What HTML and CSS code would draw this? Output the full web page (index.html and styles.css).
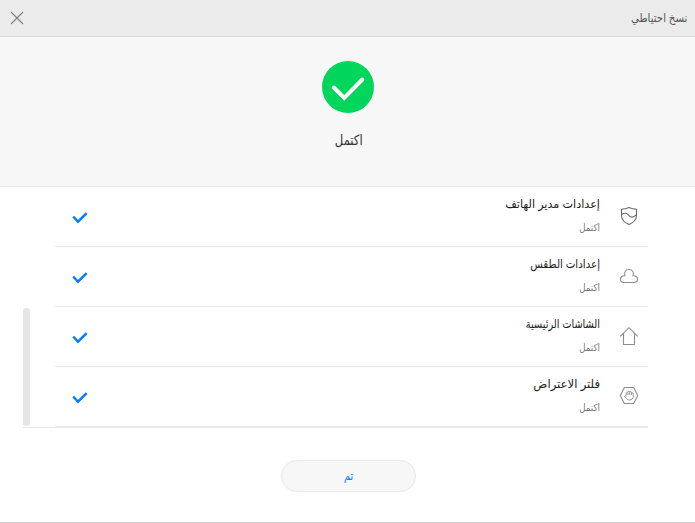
FILE: index.html
```html
<!DOCTYPE html>
<html lang="ar" dir="rtl">
<head>
<meta charset="utf-8">
<title>نسخ احتياطي</title>
<link rel="stylesheet" href="styles.css">
</head>
<body>
<div class="window">
  <header class="titlebar">
    <h1>نسخ احتياطي</h1>
    <svg class="close" width="14" height="14" viewBox="0 0 14 14"><path d="M1 1l12 12M13 1L1 13"/></svg>
  </header>
  <section class="status">
    <svg width="52" height="52" viewBox="0 0 52 52"><circle cx="26" cy="26" r="26" fill="#00d65b"/><path d="M11.800 26.500L22.200 37L40.300 18.500" fill="none" stroke="#fff" stroke-width="4" stroke-linecap="round"/></svg>
    <p>اكتمل</p>
  </section>
  <main class="list">
    <ul>
      <li>
        <svg class="icon shield" viewBox="0 0 20 20"><path d="M10 1.500Q13.500 3 17.500 3.200V10Q17 15.500 10 18.500Q3 15.500 2.500 10V3.200Q6.500 3 10 1.500ZM2.500 8.500C7 5.500 9 8.500 11 10.500Q14 12.500 17.500 8.500"/></svg>
        <div class="text"><h2 class="manager">إعدادات مدير الهاتف</h2><p>اكتمل</p></div>
        <svg class="check" viewBox="0 0 16 12"><path d="M1.200 4.500L6 9.700L14.700 1.200"/></svg>
      </li>
      <li>
        <svg class="icon" viewBox="0 0 20 20"><path d="M5 16.500H15C17.200 16.500 18.500 15 18.500 13C18.500 11 16.800 9.500 14 9.700C15.500 6 13 3.500 10 3.500C7 3.500 4.500 6 6 9.700C3.200 9.500 1.500 11 1.500 13C1.500 15 2.800 16.500 5 16.500Z"/></svg>
        <div class="text"><h2 class="weather">إعدادات الطقس</h2><p>اكتمل</p></div>
        <svg class="check" viewBox="0 0 16 12"><path d="M1.200 4.500L6 9.700L14.700 1.200"/></svg>
      </li>
      <li>
        <svg class="icon" viewBox="0 0 20 20"><path d="M1.300 10.300L10 1.700L18.700 10.300M4.500 7.500V18.500H15.500V7.500"/></svg>
        <div class="text"><h2 class="home">الشاشات الرئيسية</h2><p>اكتمل</p></div>
        <svg class="check" viewBox="0 0 16 12"><path d="M1.200 4.500L6 9.700L14.700 1.200"/></svg>
      </li>
      <li>
        <svg class="icon" viewBox="0 0 20 20"><path d="M5.300 1.500H14.700L18.700 9.500L14.700 17.500H5.300L1.300 9.500Z"/><path class="fine" d="M7.200 9.500V6.500Q8 5 8.900 6.500V9M8.900 6Q9.800 4 10.700 5.800V9M10.700 6Q11.700 4.300 12.500 6.300V9M12.500 7Q14.200 6 14.300 8V11Q13.800 14 10.500 14Q8.500 14 7.300 12.500L5.600 10.200Q6 8.700 7.500 10.400"/></svg>
        <div class="text"><h2 class="filter">فلتر الاعتراض</h2><p>اكتمل</p></div>
        <svg class="check" viewBox="0 0 16 12"><path d="M1.200 4.500L6 9.700L14.700 1.200"/></svg>
      </li>
    </ul>
    <div class="scrollbar"></div>
  </main>
  <footer><button><span>تم</span></button></footer>
</div>
</body>
</html>
```
FILE: styles.css
```css
* { box-sizing: border-box; margin: 0; padding: 0; }
body { background: #fff; color: #222; font-family: "Liberation Sans", "DejaVu Sans", sans-serif; }
svg { display: block; flex: none; }
.window { height: 523px; display: flex; flex-direction: column; overflow: hidden; border-bottom: 1px solid #d0d0d0; }
.titlebar { height: 37px; flex: none; display: flex; align-items: center; justify-content: space-between; padding: 0 8px 0 10px; background: #ebebeb; border-bottom: 1px solid #dcdcdc; }
.titlebar h1 { font-size: 12px; font-weight: 400; line-height: 20px; color: #555; transform: scaleX(.85); transform-origin: right; }
.close { fill: none; stroke: #808080; stroke-width: 1.1; }
.status { height: 150px; flex: none; display: flex; flex-direction: column; align-items: center; padding-top: 24px; background: #f7f7f7; border-bottom: 1px solid #e6e6e6; }
.status p { margin: 17px 0 0 2px; font-size: 14px; line-height: 20px; color: #333; transform: scaleX(.83); }
.list { height: 241px; flex: none; margin: 0 47px 0 23px; display: flex; align-items: flex-end; justify-content: space-between; border-bottom: 1px solid #e8e8e8; }
ul { width: 593px; list-style: none; }
li { height: 60px; display: flex; align-items: flex-start; padding: 19px 9px 0 17px; border-bottom: 1px solid #e7e7e7; }
.icon { width: 20px; height: 20px; fill: none; stroke: #8c8c8c; stroke-width: 1.1; }
.shield { stroke: #686868; }
.fine { stroke-width: .9; }
.text { flex: 1; margin: -12px 19px 0 0; }
.text h2 { font-size: 12px; font-weight: 400; line-height: 20px; color: #222; transform-origin: right; }
.text .manager { transform: scaleX(.935); }
.text .weather { transform: scaleX(.855); }
.text .home { transform: scaleX(.815); }
.text .filter { transform: scaleX(.97); }
.text p { margin-top: 5px; font-size: 10px; line-height: 18px; color: #777; transform: scaleX(.87); transform-origin: right; }
.check { width: 16px; height: 12px; margin: 6px 0 0 0; fill: none; stroke: #007dff; stroke-width: 2.4; }
.scrollbar { width: 7px; height: 118px; margin-bottom: 1px; border-radius: 3px; background: #e5e5e5; }
footer { flex: 1; display: flex; justify-content: center; align-items: flex-start; padding-top: 32px; }
button { width: 135px; height: 32px; margin-right: -1px; padding-left: 2px; border: 1px solid #e8e8e8; border-radius: 16px; background: #f7f7f7; color: #007dff; font: 12px "Liberation Sans", "DejaVu Sans", sans-serif; }
button span { display: inline-block; transform: scaleX(.82); }
```
